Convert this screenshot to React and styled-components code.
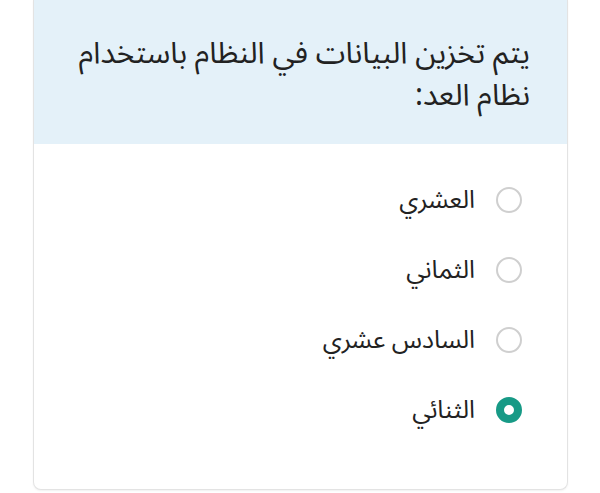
import React from "react";
import styled, { createGlobalStyle } from "styled-components";

const Global = createGlobalStyle`
  html, body { margin: 0; padding: 0; background: #ffffff; }
  body { font-family: "Noto Sans Arabic", "Noto Sans", "DejaVu Sans", sans-serif; }
`;

const Page = styled.div`
  width: 600px;
  height: 493px;
  overflow: hidden;
  padding: 0 32px 0 33px;
  box-sizing: border-box;
`;

const Card = styled.div`
  direction: rtl;
  height: 490px;
  box-sizing: border-box;
  border: 1.5px solid #e3e3e3;
  border-top: none;
  border-radius: 0 0 8px 8px;
  background: #fff;
  box-shadow: 0 1px 2px rgba(0, 0, 0, 0.06);
  overflow: hidden;
`;

const Header = styled.div`
  background: #e4f1f9;
  height: 144px;
  box-sizing: border-box;
  padding: 33px 37px 0 30px;
`;

const Question = styled.div`
  font-size: 30px;
  line-height: 42px;
  color: #222;
  text-align: right;
`;

const Options = styled.div`
  display: flex;
  flex-direction: column;
  padding: 43px 45px 0 0;
  gap: 44px;
`;

const Option = styled.label`
  display: flex;
  align-items: center;
  gap: 21px;
  height: 26px;
  font-size: 25px;
  color: #222;
`;

const Radio = styled.span`
  width: 26px;
  height: 26px;
  box-sizing: border-box;
  border-radius: 50%;
  flex: none;
  border: ${(p) => (p.$checked ? "8px solid #179a86" : "2.5px solid #cfcfcf")};
  background: #fff;
`;

const items = ["العشري", "الثماني", "السادس عشري", "الثنائي"];

export default function App() {
  return (
    <>
      <Global />
      <Page>
        <Card>
          <Header>
            <Question>يتم تخزين البيانات في النظام باستخدام نظام العد:</Question>
          </Header>
          <Options>
            {items.map((t, i) => (
              <Option key={t}>
                <Radio $checked={i === 3} />
                {t}
              </Option>
            ))}
          </Options>
        </Card>
      </Page>
    </>
  );
}
